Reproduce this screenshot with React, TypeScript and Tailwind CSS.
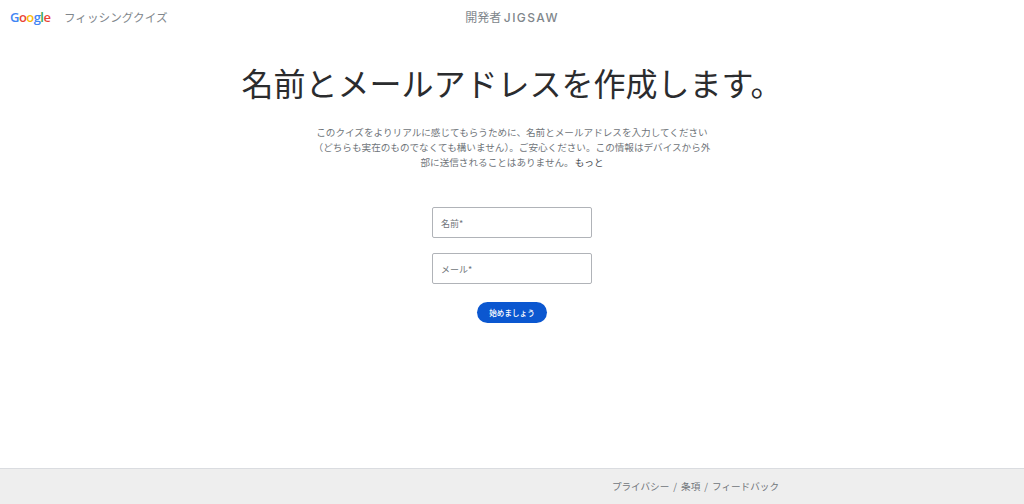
export default function App() {
  const jp = { fontFamily: '"Noto Sans CJK JP", sans-serif' };
  return (
    <div className="flex h-[504px] w-full flex-col bg-white" style={jp}>
      <header className="relative flex h-[36px] shrink-0 items-center">
        <div className="flex items-center pl-[10px]">
          <span className="-mt-[2px] w-[41px] text-[13px] font-semibold leading-none tracking-[-0.55px] font-['Open_Sans',sans-serif]">
            <span className="text-[#4285f4]">G</span>
            <span className="text-[#ea4335]">o</span>
            <span className="text-[#fbbc05]">o</span>
            <span className="text-[#4285f4]">g</span>
            <span className="text-[#34a853]">l</span>
            <span className="text-[#ea4335]">e</span>
          </span>
          <span className="ml-[13px] text-[11.6px] leading-none text-[#80868b]">フィッシングクイズ</span>
        </div>
        <div className="absolute inset-x-0 top-[10px] text-center text-[12px] leading-[14px] text-[#80868b]">
          開発者 <span className="font-medium tracking-[1.4px] font-['Inter',sans-serif]">JIGSAW</span>
        </div>
      </header>
      <main className="flex flex-1 flex-col items-center">
        <h1 className="mt-[22px] text-[32px] font-normal leading-[48px] text-[#2b2c2e]">名前とメールアドレスを作成します。</h1>
        <p className="mt-[19px] w-[400px] text-center text-[9.6px] leading-[15px] text-[#70757a]">
          このクイズをよりリアルに感じてもらうために、名前とメールアドレスを入力してください（どちらも実在のものでなくても構いません）。ご安心ください。この情報はデバイスから外部に送信されることはありません。<span className="ml-[1px] text-[#4a4d52]">もっと</span>
        </p>
        <div className="mt-[37px] flex h-[31px] w-[160px] items-center rounded-[2px] border border-[#b0b3b8] px-[8px] pt-[3px] text-[9px] text-[#70757a]">名前*</div>
        <div className="mt-[15px] flex h-[31px] w-[160px] items-center rounded-[2px] border border-[#b0b3b8] px-[8px] pt-[3px] text-[9px] text-[#70757a]">メール*</div>
        <button className="mt-[18px] h-[21px] w-[70px] rounded-full bg-[#0b57d0] text-[7.5px] font-medium tracking-[0.1px] text-white">始めましょう</button>
      </main>
      <footer className="flex h-[36px] shrink-0 items-center justify-end border-t border-[#dadce0] bg-[#eeeeee] pr-[245px] text-[9.6px] text-[#70757a]">
        <span>プライバシー</span><span className="mx-[4px]">/</span><span>条項</span><span className="mx-[4px]">/</span><span>フィードバック</span>
      </footer>
    </div>
  );
}
